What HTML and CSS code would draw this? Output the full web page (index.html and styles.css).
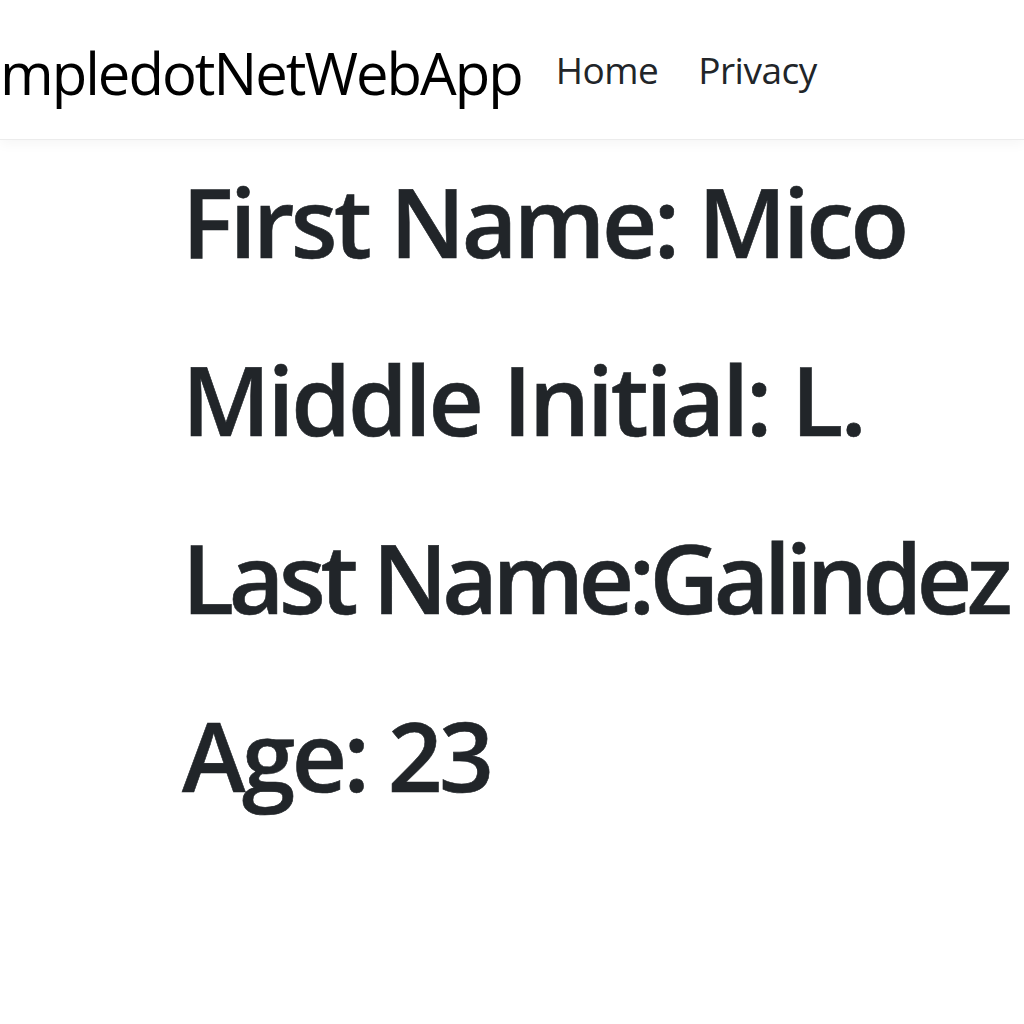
FILE: index.html
```html
<!DOCTYPE html>
<html lang="en">
<head>
<meta charset="utf-8">
<title>SampledotNetWebApp</title>
<link rel="stylesheet" href="styles.css">
</head>
<body>
<header class="navbar">
  <a class="brand" href="#">SampledotNetWebApp</a>
  <nav class="nav">
    <a class="nav-link" href="#">Home</a>
    <a class="nav-link" href="#">Privacy</a>
  </nav>
</header>
<main class="content">
  <h1 class="field">First Name: Mico</h1>
  <h1 class="field field-loose">Middle Initial: L.</h1>
  <h1 class="field field-tight">Last Name:Galindez</h1>
  <h1 class="field">Age: 23</h1>
</main>
</body>
</html>
```

FILE: styles.css
```css
html, body {
  margin: 0;
  padding: 0;
  background: #fff;
  overflow: hidden;
}
body {
  font-family: "Open Sans", "Noto Sans", sans-serif;
  color: #212529;
  width: 1024px;
  height: 1024px;
}
a { text-decoration: none; }
.navbar {
  height: 140px;
  box-sizing: border-box;
  display: flex;
  align-items: center;
  border-bottom: 1px solid #ececec;
  box-shadow: 0 4px 12px rgba(0,0,0,0.04);
  overflow: hidden;
}
.brand {
  font-size: 58px;
  color: #000;
  margin-left: -60px;
  margin-top: 6px;
  white-space: nowrap;
  letter-spacing: -2px;
}
.nav {
  display: flex;
  gap: 40px;
  margin-left: 34px;
}
.nav-link {
  font-size: 37px;
  color: #212529;
  letter-spacing: -0.5px;
}
.content {
  display: flex;
  flex-direction: column;
  gap: 63px;
  padding: 23px 0 0 182px;
}
.field {
  margin: 0;
  font-size: 96px;
  font-weight: 600;
  line-height: 115px;
  white-space: nowrap;
  letter-spacing: -3.5px;
  -webkit-text-stroke: 0.6px #212529;
}
.field-loose { letter-spacing: -3px; }
.field-tight { letter-spacing: -5.4px; }
```
